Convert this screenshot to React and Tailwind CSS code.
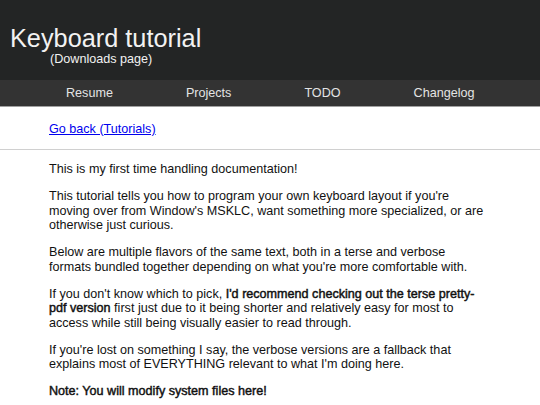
export default function App() {
  const font = { fontFamily: '"Liberation Sans", Arial, sans-serif' };
  const nav = ["Resume", "Projects", "TODO", "Changelog"];
  return (
    <div style={font} className="min-h-[405px] bg-white text-[12.6px] leading-[1.15] text-[#111]">
      <header className="h-[80px] bg-[#232525] pt-[23.7px] pl-[10px] text-[#f2f2f2]">
        <div className="text-[25.3px] leading-[1.15]">Keyboard tutorial</div>
        <div className="pl-[40px] text-[12.6px] leading-[1.15] -mt-[0.3px]">(Downloads page)</div>
      </header>
      <nav className="flex h-[27px] border-b border-[#a0a0a0] bg-[#333333] pl-[29.5px] pt-[6px] text-[#e4e4e4]">
        {nav.map((n) => (
          <span key={n} className="px-[36.5px]">{n}</span>
        ))}
      </nav>
      <div className="border-b border-[#d0d0d0] px-[49px] pt-[15px] pb-[12.5px]">
        <a href="#" className="text-[#0000ee] underline">Go back (Tutorials)</a>
      </div>
      <main className="px-[49px] pt-[12.4px] pr-[50px]">
        <p>This is my first time handling documentation!</p>
        <p className="mt-[12.6px]">
          This tutorial tells you how to program your own keyboard layout if you're moving over from Window's MSKLC, want something more specialized, or are otherwise just curious.
        </p>
        <p className="mt-[12.6px]">
          Below are multiple flavors of the same text, both in a terse and verbose formats bundled together depending on what you're more comfortable with.
        </p>
        <p className="mt-[12.6px]">
          If you don't know which to pick, <b className="font-normal [-webkit-text-stroke:0.45px_currentColor]">I'd recommend checking out the terse pretty-pdf version</b> first just due to it being shorter and relatively easy for most to access while still being visually easier to read through.
        </p>
        <p className="mt-[12.6px]">
          If you're lost on something I say, the verbose versions are a fallback that explains most of EVERYTHING relevant to what I'm doing here.
        </p>
        <p className="mt-[12.6px] font-normal [-webkit-text-stroke:0.45px_currentColor]">Note: You will modify system files here!</p>
      </main>
    </div>
  );
}
